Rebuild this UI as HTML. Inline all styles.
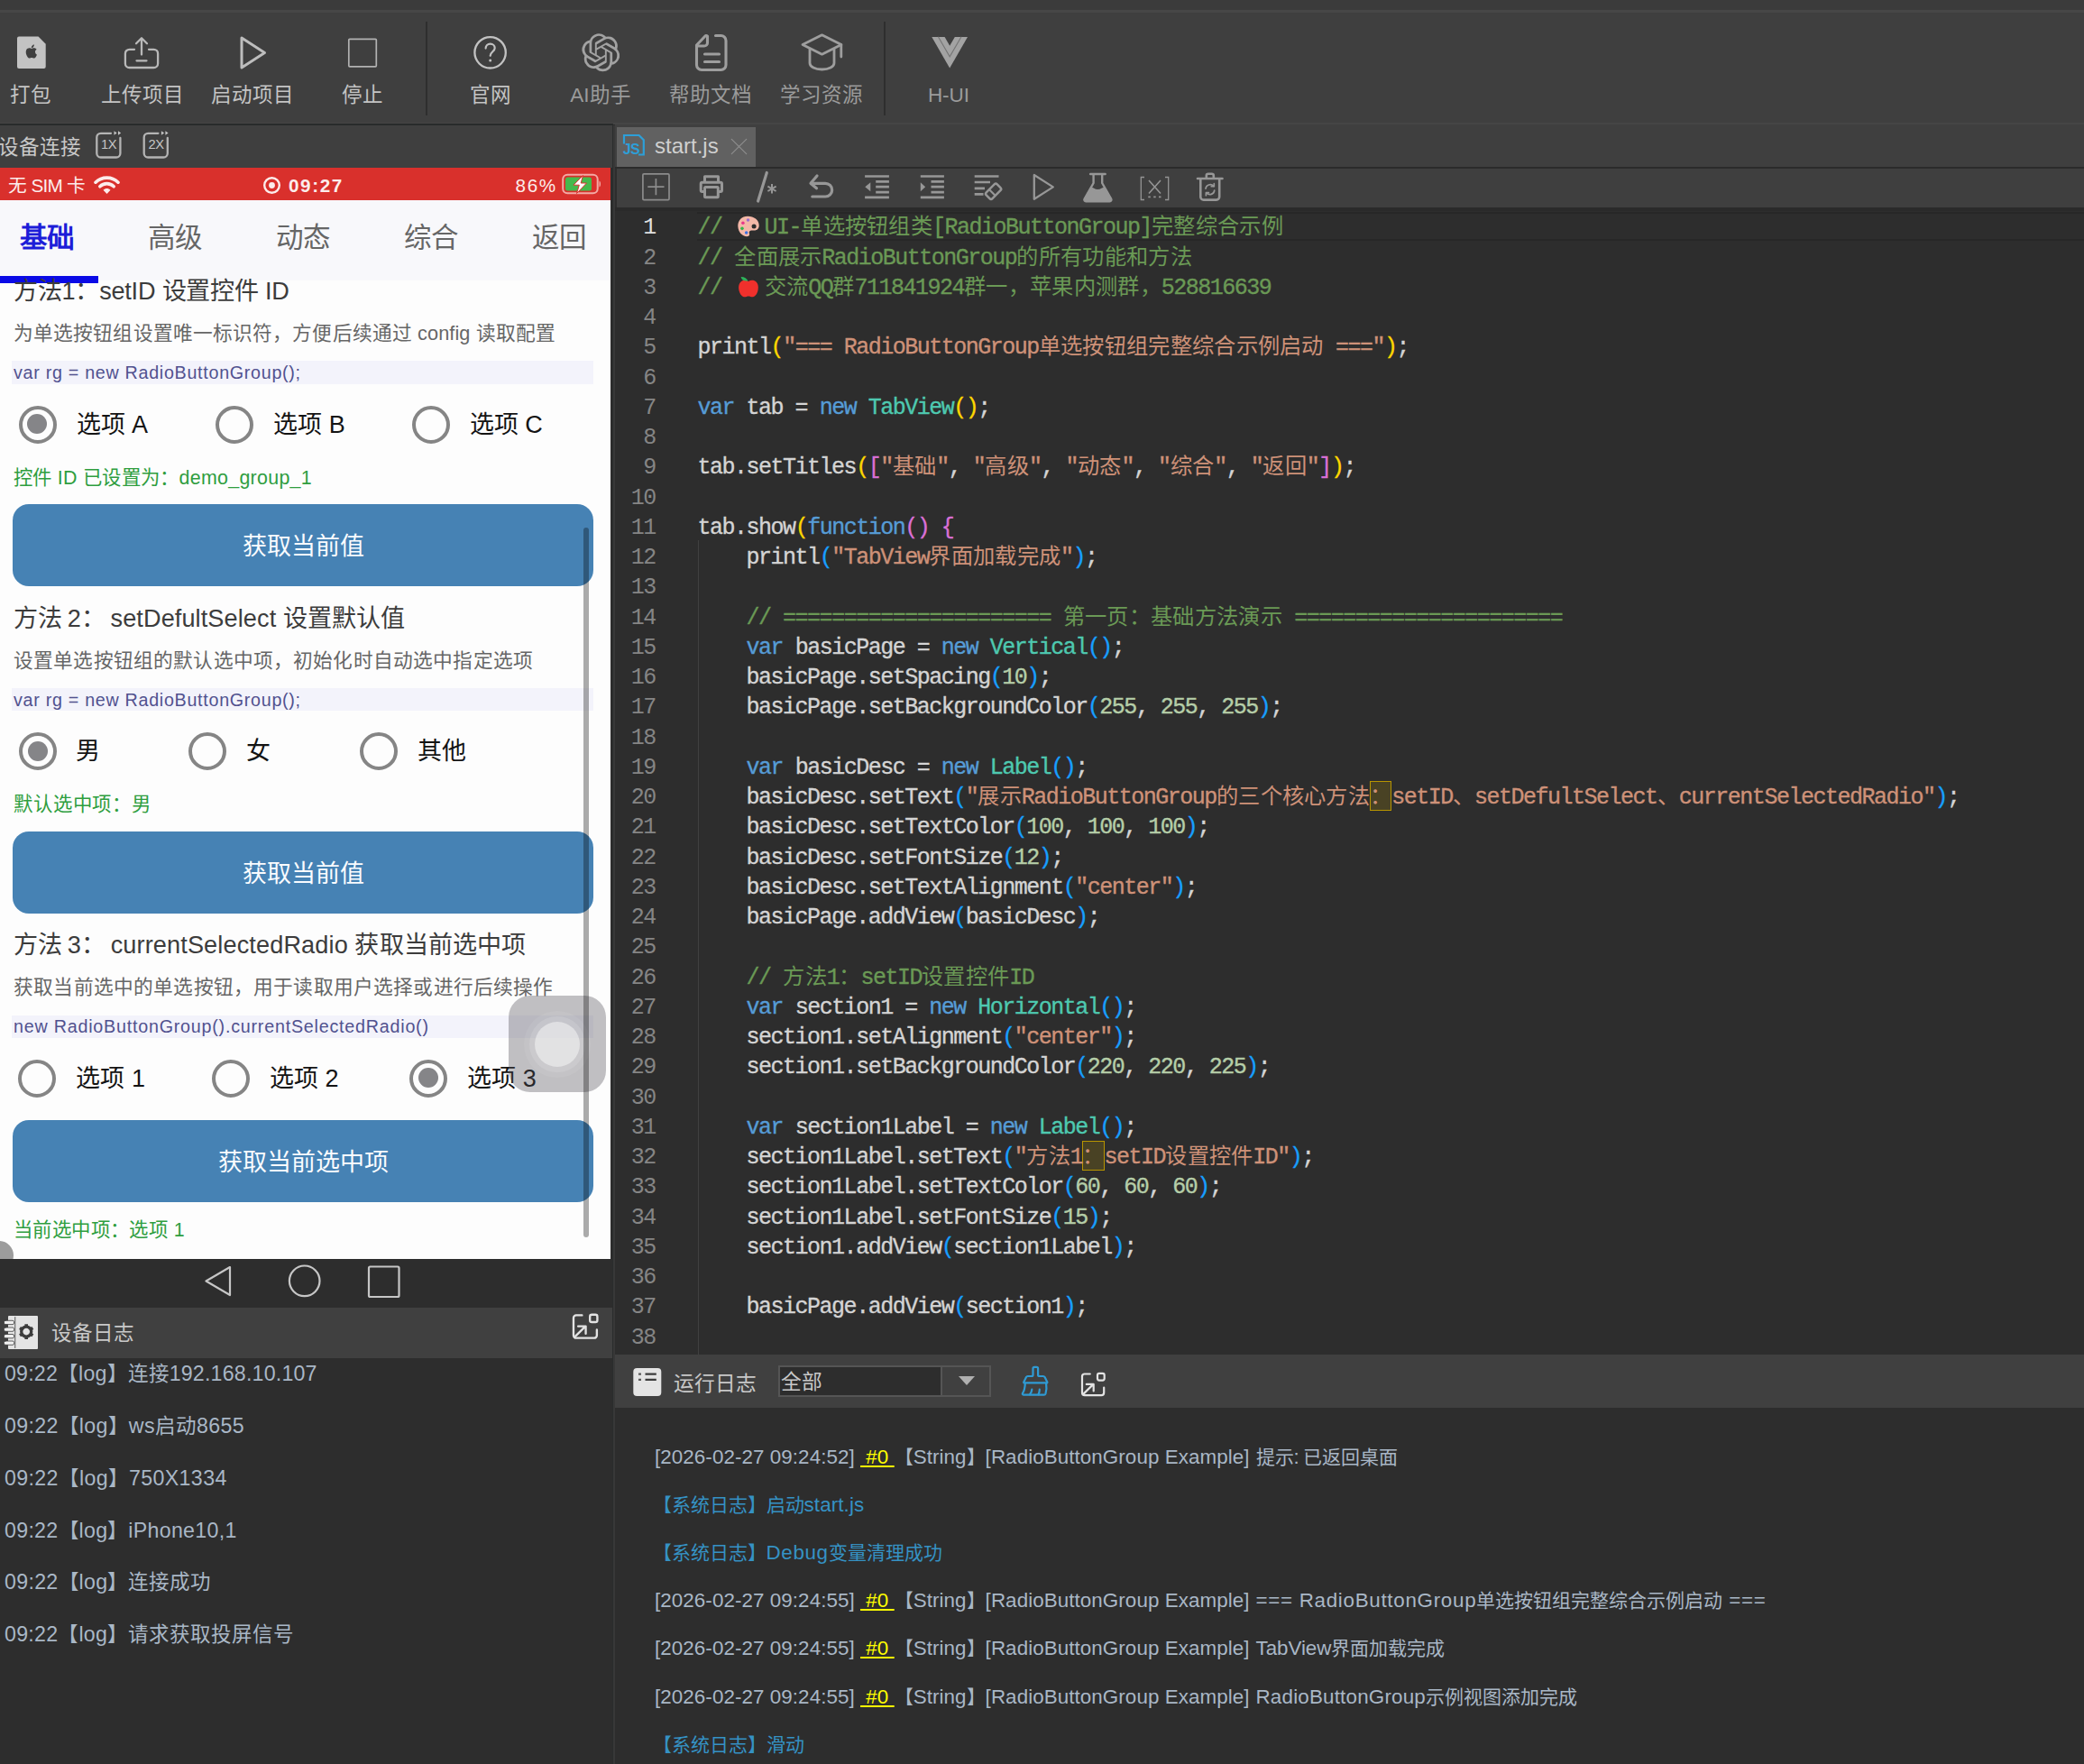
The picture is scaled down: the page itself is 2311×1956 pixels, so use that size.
<!DOCTYPE html>
<html lang="zh-CN"><head><meta charset="utf-8"><title>IDE</title>
<style>
*{margin:0;padding:0;box-sizing:border-box}
html,body{width:2311px;height:1956px;overflow:hidden;background:#2d2d2d}
body{position:relative;font-family:"Liberation Sans",sans-serif;color:#c8c8c8}
.abs,body>div,#phone div,#phone svg,body>svg{position:absolute}
/* ---- chrome ---- */
#topstrip{left:0;top:0;width:2311px;height:11px;background:#3b3b3b}
#topline{left:0;top:11px;width:2311px;height:3px;background:#474747}
#toolbar{left:0;top:14px;width:2311px;height:122px;background:#3f3f3f}
#tbline{left:0;top:136px;width:2311px;height:2px;background:#454545}
#tblineL{left:0;top:136.700px;width:680px;height:2.700px;background:#282b2b}
.vsep{width:2px;top:24px;height:104px;background:#2e2e2e}
.tl{top:92px;height:28px;line-height:28px;font-size:22.5px;color:#c4c4c4;text-align:center;white-space:nowrap;width:160px}
.tl.d{color:#9b9b9b}
#lhead{left:0;top:139px;width:678.800px;height:47px;background:#3f3f3f}
#lheadr{left:678.800px;top:137px;width:1.300px;height:1819px;background:#2a2c2c}
#lheadt{left:-2.500px;top:150px;font-size:22.5px;line-height:28px;color:#c8c8c8;white-space:nowrap}
#split{left:680.100px;top:139px;width:1.900px;height:1817px;background:#383838}
#tabbar{left:682px;top:138px;width:1629px;height:47px;background:#3f3f3f}
#tab{left:684px;top:141px;width:153.500px;height:44px;background:#616161}
#tabt{left:726px;top:146px;font-size:24px;line-height:32px;color:#d0d0d0;white-space:nowrap}
#tabline{left:682px;top:185px;width:1629px;height:2px;background:#2b2b2b}
#etool{left:684px;top:187px;width:1627px;height:43px;background:#3f3f3f}
#egap{left:682px;top:230px;width:1629px;height:4px;background:#2a2a2a}
#editor{left:682px;top:0;width:1629px;height:1502px;overflow:hidden}
#curline{left:773px;top:235px;width:1538px;height:32px;border-top:2px solid #272727;border-bottom:2px solid #272727}
#guide{left:774px;top:599px;width:1px;height:903px;background:#404040}
/* ---- code ---- */
#editor div{position:absolute}
.ln{left:0;width:44.7px;text-align:right;font-family:"Liberation Mono",monospace;font-size:25px;letter-spacing:-1.5px;line-height:33.25px;height:33.25px;color:#858585;white-space:pre}
.ln.a{color:#e0e0e0}
.cl_{-webkit-text-stroke:.35px;left:91.6px;font-family:"Liberation Mono",monospace;font-size:25px;letter-spacing:-1.5px;line-height:33.25px;height:33.25px;color:#d4d4d4;white-space:pre}
.cm{color:#6a9955}.kw{color:#569cd6}.cl{color:#4ec9b0}.st{color:#ce9178}.nu{color:#b5cea8}
.c{font-family:"Liberation Serif",serif;font-size:24.3px;line-height:20px;letter-spacing:0;-webkit-text-stroke:0}
.c i{display:inline-block;width:24.3px;text-align:center;font-style:normal}
.ub{width:24.3px;height:32.6px;border:1.5px solid #b89500;background:rgba(184,149,0,.2)}
.emo{position:static!important;display:inline-block;width:32px;height:30px;vertical-align:-7px;margin-right:1.5px}
/* ---- logs ---- */
#dlhead{left:0;top:1450px;width:679px;height:56px;background:#404040}
#dlheadt{left:57px;top:1463.200px;font-size:22.5px;line-height:32px;color:#c8c8c8;white-space:nowrap}
.dl{left:5px;font-size:23.2px;line-height:40px;height:40px;color:#a9b7c6;white-space:nowrap}
#rlhead{left:682px;top:1502px;width:1629px;height:59px;background:#404040}
#rlheadt{left:747px;top:1518px;font-size:22.7px;line-height:32px;color:#c8c8c8;white-space:nowrap}
#rlsel{left:862.800px;top:1514px;width:236px;height:35px;border:2px solid #555;background:#404040}
#rlsel i{position:absolute;left:0;top:0;width:180px;height:31px;background:#2d2d2d;border-right:2px solid #555}
#rlselt{left:866px;top:1515.500px;font-size:22.7px;line-height:32px;color:#c8c8c8}
#rlarr{left:1062.800px;top:1526.300px;width:0;height:0;border-left:9px solid transparent;border-right:9px solid transparent;border-top:10px solid #b0b0b0}
.rl{left:726px;font-size:22.4px;line-height:40px;height:40px;color:#a9b7c6;white-space:nowrap}
.rl.sy{color:#3592c4;left:723.5px}
.rl .k{font-size:21px;letter-spacing:0}
.dl .k{font-size:22.5px;letter-spacing:0}
.h0{color:#ffff00;text-decoration:underline}
/* ---- phone ---- */
#phone{left:0;top:0;width:679px;height:1450px;overflow:hidden}
#pbg{left:0;top:222px;width:677px;height:1174px;background:#fdfdfd}
#pstat{left:0;top:186px;width:677px;height:36px;background:#d9302c}
.pt{white-space:nowrap}
.st1{font-size:20.7px;line-height:24px;color:#fceceb}
.st1.b{font-weight:bold}
#ptabs{left:0;top:222px;width:677px;height:89px;background:#f8f8fb}
#ptabs2{display:none}
.tb{font-size:30.5px;line-height:38px;color:#666}
.tb.a{color:#1d1dd8;font-weight:bold}
#pind{left:0;top:306px;width:109px;height:7.500px;background:#0a0ae6}
.ti{font-size:27.1px;line-height:34px;color:#3c3c3c}
.de{font-size:21.7px;line-height:28px;color:#666}
.pcb{left:13px;width:645px;height:25.500px;background:#f3f3fb}
.co{font-size:19.7px;line-height:26px;color:#51518f}
.rd{width:42px;height:42px;border-radius:50%;border:4.500px solid #858585}
.rd i{position:absolute;left:5.500px;top:5.500px;width:22px;height:22px;border-radius:50%;background:#858588}
.rl_{font-size:27px;line-height:36px;color:#141414}
.gr{font-size:21.4px;line-height:26px;color:#2f9e3f}
.bt{left:14.400px;width:644px;height:90.600px;border-radius:18px;background:#4682b4;color:#fafcff;font-size:27px;line-height:95px;text-align:center;overflow:hidden}
#at{left:563.500px;top:1104px;width:108.500px;height:107px;border-radius:24px;background:rgba(76,74,82,.35)}
#at i,#at b,#at u{position:absolute;display:block}
#at i{left:17.500px;top:17px;width:74px;height:74px;border-radius:50%;background:rgba(255,255,255,.07)}
#at b{left:23.500px;top:23px;width:62px;height:62px;border-radius:50%;background:rgba(255,255,255,.13)}
#at u{left:29.700px;top:28.800px;width:50px;height:50px;border-radius:50%;background:rgba(255,255,255,.45)}
#corner{left:-17px;top:1376px;width:32px;height:32px;border-radius:50%;background:#9c9c9c}
#psb{left:647.200px;top:584.600px;width:5.500px;height:787px;border-radius:3px;background:rgba(0,0,0,.32)}
#pnav{left:0;top:1395.600px;width:679px;height:55px;background:#2d2d2d}
#jst{left:690.800px;top:156.600px;font-size:16px;font-weight:bold;line-height:18px;color:#2d9fd8;letter-spacing:-.6px}
.xt{top:151px;font-size:14.700px;line-height:18px;color:#c6c6c6;letter-spacing:-.3px}
.rm{font-size:22.4px;line-height:40px;height:40px;color:#a9b7c6;white-space:nowrap;left:1392.500px}
.rm .k{font-size:21px;letter-spacing:0}

</style></head><body>
<div id="topstrip"></div><div id="topline"></div>
<div id="toolbar"></div><div id="tbline"></div><div id="tblineL"></div>
<div class="vsep" style="left:472px"></div><div class="vsep" style="left:980px"></div>
<div class="tl" style="left:-46px">打包</div>
<div class="tl" style="left:78px">上传项目</div>
<div class="tl" style="left:200px">启动项目</div>
<div class="tl" style="left:322px">停止</div>
<div class="tl" style="left:464px">官网</div>
<div class="tl d" style="left:586px">AI助手</div>
<div class="tl d" style="left:708px">帮助文档</div>
<div class="tl d" style="left:831px">学习资源</div>
<div class="tl d" style="left:972px">H-UI</div>
<div id="lhead"></div><div id="lheadt">设备连接</div>
<div id="lheadr"></div><div id="split"></div>
<div id="tabbar"></div><div id="tab"></div><div id="tabt">start.js</div><div id="tabline"></div>
<div id="etool"></div><div id="egap"></div>
<div id="curline"></div><div id="guide"></div>
<div id="dlhead"></div><div id="dlheadt">设备日志</div>
<div id="rlhead"></div><div id="rlheadt">运行日志</div>
<div id="rlsel"><i></i></div><div id="rlselt">全部</div><div id="rlarr"></div>
<div class="ub" style="left:1518.900px;top:866px"></div><div class="ub" style="left:1200.300px;top:1265px"></div>

<!-- editor -->
<div id="editor">
<div class="ln a" style="top:236.30px">1</div>
<div class="cl_" style="top:236.30px"><span class="cm">// <svg class="emo" viewBox="0 0 32 32"><path d="M15 4C8 4 3.5 9 3.5 15.5S8.5 28 14 28c2.6 0 3.6-1.6 3-3.4-.7-2.2.3-3.8 2.6-3.8h3.2c3.4 0 5.7-2.4 5.7-6C28.500 8.500 22.500 4 15 4z" fill="#f4b8a8"></path><circle cx="22.500" cy="16" r="2.700" fill="#2d2d2d"></circle><circle cx="9.500" cy="12" r="1.900" fill="#e8358a"></circle><circle cx="15.500" cy="8.500" r="1.900" fill="#9a6fd0"></circle><circle cx="8.500" cy="18.500" r="1.900" fill="#35b54a"></circle><circle cx="13.500" cy="23.500" r="1.900" fill="#3a6fe0"></circle></svg>UI-<span class="c"><i>单</i><i>选</i><i>按</i><i>钮</i><i>组</i><i>类</i></span>[RadioButtonGroup]<span class="c"><i>完</i><i>整</i><i>综</i><i>合</i><i>示</i><i>例</i></span></span></div>
<div class="ln" style="top:269.55px">2</div>
<div class="cl_" style="top:269.55px"><span class="cm">// <span class="c"><i>全</i><i>面</i><i>展</i><i>示</i></span>RadioButtonGroup<span class="c"><i>的</i><i>所</i><i>有</i><i>功</i><i>能</i><i>和</i><i>方</i><i>法</i></span></span></div>
<div class="ln" style="top:302.80px">3</div>
<div class="cl_" style="top:302.80px"><span class="cm">// <svg class="emo" viewBox="0 0 32 32"><path d="M16 9.500c-2.500-1.600-6-1.800-8.500.200C4.500 12 3.800 16.500 5 21c1 3.800 3.600 7 6.500 7 1.800 0 2.600-.8 4.500-.8s2.700.8 4.500.8c2.900 0 5.500-3.200 6.500-7 1.200-4.500.5-9-2.500-11.300-2.500-2-6-1.800-8.500-.2z" fill="#f0302c"></path><path d="M15.500 9C14 6 11 4 7 4.200 8 8 11 9.800 15.500 9z" fill="#2fb25a"></path></svg><span class="c"><i>交</i><i>流</i></span>QQ<span class="c"><i>群</i></span>711841924<span class="c"><i>群</i><i>一</i><i>，</i><i>苹</i><i>果</i><i>内</i><i>测</i><i>群</i><i>，</i></span>528816639</span></div>
<div class="ln" style="top:336.05px">4</div>
<div class="ln" style="top:369.30px">5</div>
<div class="cl_" style="top:369.30px">printl<span style="color:#ffd700">(</span><span class="st">"=== RadioButtonGroup<span class="c"><i>单</i><i>选</i><i>按</i><i>钮</i><i>组</i><i>完</i><i>整</i><i>综</i><i>合</i><i>示</i><i>例</i><i>启</i><i>动</i></span> ==="</span><span style="color:#ffd700">)</span>;</div>
<div class="ln" style="top:402.55px">6</div>
<div class="ln" style="top:435.80px">7</div>
<div class="cl_" style="top:435.80px"><span class="kw">var</span> tab = <span class="kw">new</span> <span class="cl">TabView</span><span style="color:#ffd700">(</span><span style="color:#ffd700">)</span>;</div>
<div class="ln" style="top:469.05px">8</div>
<div class="ln" style="top:502.30px">9</div>
<div class="cl_" style="top:502.30px">tab.setTitles<span style="color:#ffd700">(</span><span style="color:#da70d6">[</span><span class="st">"<span class="c"><i>基</i><i>础</i></span>"</span>, <span class="st">"<span class="c"><i>高</i><i>级</i></span>"</span>, <span class="st">"<span class="c"><i>动</i><i>态</i></span>"</span>, <span class="st">"<span class="c"><i>综</i><i>合</i></span>"</span>, <span class="st">"<span class="c"><i>返</i><i>回</i></span>"</span><span style="color:#da70d6">]</span><span style="color:#ffd700">)</span>;</div>
<div class="ln" style="top:535.55px">10</div>
<div class="ln" style="top:568.80px">11</div>
<div class="cl_" style="top:568.80px">tab.show<span style="color:#ffd700">(</span><span class="kw">function</span><span style="color:#da70d6">(</span><span style="color:#da70d6">)</span> <span style="color:#da70d6">{</span></div>
<div class="ln" style="top:602.05px">12</div>
<div class="cl_" style="top:602.05px">    printl<span style="color:#179fff">(</span><span class="st">"TabView<span class="c"><i>界</i><i>面</i><i>加</i><i>载</i><i>完</i><i>成</i></span>"</span><span style="color:#179fff">)</span>;</div>
<div class="ln" style="top:635.30px">13</div>
<div class="ln" style="top:668.55px">14</div>
<div class="cl_" style="top:668.55px">    <span class="cm">// ====================== <span class="c"><i>第</i><i>一</i><i>页</i><i>：</i><i>基</i><i>础</i><i>方</i><i>法</i><i>演</i><i>示</i></span> ======================</span></div>
<div class="ln" style="top:701.80px">15</div>
<div class="cl_" style="top:701.80px">    <span class="kw">var</span> basicPage = <span class="kw">new</span> <span class="cl">Vertical</span><span style="color:#179fff">(</span><span style="color:#179fff">)</span>;</div>
<div class="ln" style="top:735.05px">16</div>
<div class="cl_" style="top:735.05px">    basicPage.setSpacing<span style="color:#179fff">(</span><span class="nu">10</span><span style="color:#179fff">)</span>;</div>
<div class="ln" style="top:768.30px">17</div>
<div class="cl_" style="top:768.30px">    basicPage.setBackgroundColor<span style="color:#179fff">(</span><span class="nu">255</span>, <span class="nu">255</span>, <span class="nu">255</span><span style="color:#179fff">)</span>;</div>
<div class="ln" style="top:801.55px">18</div>
<div class="ln" style="top:834.80px">19</div>
<div class="cl_" style="top:834.80px">    <span class="kw">var</span> basicDesc = <span class="kw">new</span> <span class="cl">Label</span><span style="color:#179fff">(</span><span style="color:#179fff">)</span>;</div>
<div class="ln" style="top:868.05px">20</div>
<div class="cl_" style="top:868.05px">    basicDesc.setText<span style="color:#179fff">(</span><span class="st">"<span class="c"><i>展</i><i>示</i></span>RadioButtonGroup<span class="c"><i>的</i><i>三</i><i>个</i><i>核</i><i>心</i><i>方</i><i>法</i></span><span class="c"><i style="text-align:left">：</i></span>setID<span class="c"><i>、</i></span>setDefultSelect<span class="c"><i>、</i></span>currentSelectedRadio"</span><span style="color:#179fff">)</span>;</div>
<div class="ln" style="top:901.30px">21</div>
<div class="cl_" style="top:901.30px">    basicDesc.setTextColor<span style="color:#179fff">(</span><span class="nu">100</span>, <span class="nu">100</span>, <span class="nu">100</span><span style="color:#179fff">)</span>;</div>
<div class="ln" style="top:934.55px">22</div>
<div class="cl_" style="top:934.55px">    basicDesc.setFontSize<span style="color:#179fff">(</span><span class="nu">12</span><span style="color:#179fff">)</span>;</div>
<div class="ln" style="top:967.80px">23</div>
<div class="cl_" style="top:967.80px">    basicDesc.setTextAlignment<span style="color:#179fff">(</span><span class="st">"center"</span><span style="color:#179fff">)</span>;</div>
<div class="ln" style="top:1001.05px">24</div>
<div class="cl_" style="top:1001.05px">    basicPage.addView<span style="color:#179fff">(</span>basicDesc<span style="color:#179fff">)</span>;</div>
<div class="ln" style="top:1034.30px">25</div>
<div class="ln" style="top:1067.55px">26</div>
<div class="cl_" style="top:1067.55px">    <span class="cm">// <span class="c"><i>方</i><i>法</i></span>1<span class="c"><i>：</i></span>setID<span class="c"><i>设</i><i>置</i><i>控</i><i>件</i></span>ID</span></div>
<div class="ln" style="top:1100.80px">27</div>
<div class="cl_" style="top:1100.80px">    <span class="kw">var</span> section1 = <span class="kw">new</span> <span class="cl">Horizontal</span><span style="color:#179fff">(</span><span style="color:#179fff">)</span>;</div>
<div class="ln" style="top:1134.05px">28</div>
<div class="cl_" style="top:1134.05px">    section1.setAlignment<span style="color:#179fff">(</span><span class="st">"center"</span><span style="color:#179fff">)</span>;</div>
<div class="ln" style="top:1167.30px">29</div>
<div class="cl_" style="top:1167.30px">    section1.setBackgroundColor<span style="color:#179fff">(</span><span class="nu">220</span>, <span class="nu">220</span>, <span class="nu">225</span><span style="color:#179fff">)</span>;</div>
<div class="ln" style="top:1200.55px">30</div>
<div class="ln" style="top:1233.80px">31</div>
<div class="cl_" style="top:1233.80px">    <span class="kw">var</span> section1Label = <span class="kw">new</span> <span class="cl">Label</span><span style="color:#179fff">(</span><span style="color:#179fff">)</span>;</div>
<div class="ln" style="top:1267.05px">32</div>
<div class="cl_" style="top:1267.05px">    section1Label.setText<span style="color:#179fff">(</span><span class="st">"<span class="c"><i>方</i><i>法</i></span>1<span class="c"><i style="text-align:left">：</i></span>setID<span class="c"><i>设</i><i>置</i><i>控</i><i>件</i></span>ID"</span><span style="color:#179fff">)</span>;</div>
<div class="ln" style="top:1300.30px">33</div>
<div class="cl_" style="top:1300.30px">    section1Label.setTextColor<span style="color:#179fff">(</span><span class="nu">60</span>, <span class="nu">60</span>, <span class="nu">60</span><span style="color:#179fff">)</span>;</div>
<div class="ln" style="top:1333.55px">34</div>
<div class="cl_" style="top:1333.55px">    section1Label.setFontSize<span style="color:#179fff">(</span><span class="nu">15</span><span style="color:#179fff">)</span>;</div>
<div class="ln" style="top:1366.80px">35</div>
<div class="cl_" style="top:1366.80px">    section1.addView<span style="color:#179fff">(</span>section1Label<span style="color:#179fff">)</span>;</div>
<div class="ln" style="top:1400.05px">36</div>
<div class="ln" style="top:1433.30px">37</div>
<div class="cl_" style="top:1433.30px">    basicPage.addView<span style="color:#179fff">(</span>section1<span style="color:#179fff">)</span>;</div>
<div class="ln" style="top:1466.55px">38</div>
</div>
<!-- phone -->
<div id="phone">
<div id="pbg"></div>
<div id="pstat"></div>
<div class="pt st1" style="left: 9px; top: 194px; letter-spacing: -0.669px;">无 SIM 卡</div>
<svg style="left:104px;top:194px" width="29" height="22" viewBox="0 0 29 22"><path d="M2 8.200C8.800 1.400 20.200 1.400 27 8.200" fill="none" stroke="#fceceb" stroke-width="3.600" stroke-linecap="round"></path><path d="M6.800 12.800c4.300-4.300 11.100-4.300 15.400 0" fill="none" stroke="#fceceb" stroke-width="3.600" stroke-linecap="round"></path><path d="M14.500 21l-4-4.300c2.200-2.200 5.800-2.200 8 0z" fill="#fceceb"></path></svg>
<svg style="left:291px;top:195px" width="21" height="21" viewBox="0 0 21 21"><circle cx="10.500" cy="10.500" r="8.300" fill="none" stroke="#fceceb" stroke-width="2.400"></circle><circle cx="10.500" cy="10.500" r="3.400" fill="#fceceb"></circle></svg>
<div class="pt st1 b" style="left: 320px; top: 194px; letter-spacing: 1.616px;">09:27</div>
<div class="pt st1" style="left: 571.6px; top: 194px; letter-spacing: 1.531px;">86%</div>
<svg style="left:623px;top:192px" width="46" height="25" viewBox="0 0 46 25"><rect x="1.200" y="1.700" width="38.500" height="20.600" rx="5" fill="none" stroke="#f3a9a4" stroke-width="2"></rect><rect x="4" y="4.600" width="29" height="14.800" rx="2.500" fill="#45b94c"></rect><path d="M41.500 8.500c2 .6 2 6.400 0 7z" fill="#f3a9a4"></path><path d="M23.500 2.500L13 13.200h6.300L16.500 22.500 27.500 11h-6.300z" fill="#fff" stroke="#d9302c" stroke-width="1"></path></svg>
<div id="ptabs"></div>
<div class="pt tb a" style="left:22px;top:244px">基础</div>
<div class="pt tb" style="left:164px;top:244px">高级</div>
<div class="pt tb" style="left:306px;top:244px">动态</div>
<div class="pt tb" style="left:448px;top:244px">综合</div>
<div class="pt tb" style="left:590px;top:244px">返回</div>
<div id="pind"></div>
<div class="pt ti" style="left: 15px; top: 305.8px; letter-spacing: -0.228px;">方法1：setID 设置控件 ID</div>
<div class="pt de" style="left: 15px; top: 355.8px; letter-spacing: 0.096px;">为单选按钮组设置唯一标识符，方便后续通过 config 读取配置</div>
<div class="pcb" style="top:400.2px"></div>
<div class="pt co" style="left: 15px; top: 399.8px; letter-spacing: 0.712px;">var rg = new RadioButtonGroup();</div>
<div class="rd" style="left:20.8px;top:449.5px"><i></i></div>
<div class="pt rl_" style="left:84.6px;top:452.5px">选项 A</div>
<div class="rd" style="left:239.0px;top:449.5px"></div>
<div class="pt rl_" style="left:303.3px;top:452.5px">选项 B</div>
<div class="rd" style="left:457.0px;top:449.5px"></div>
<div class="pt rl_" style="left:520.7px;top:452.5px">选项 C</div>
<div class="pt gr" style="left: 15px; top: 516.5px; letter-spacing: 0.296px;">控件 ID 已设置为：demo_group_1</div>
<div class="bt" style="top:559.4px">获取当前值</div>
<div class="pt ti" style="left: 15px; top: 668.5px; letter-spacing: 0.101px;">方法 2： setDefultSelect 设置默认值</div>
<div class="pt de" style="left: 15px; top: 718.5px; letter-spacing: 0.154px;">设置单选按钮组的默认选中项，初始化时自动选中指定选项</div>
<div class="pcb" style="top:762.9px"></div>
<div class="pt co" style="left: 15px; top: 762.5px; letter-spacing: 0.712px;">var rg = new RadioButtonGroup();</div>
<div class="rd" style="left:21.0px;top:812.2px"><i></i></div>
<div class="pt rl_" style="left:84.0px;top:815.2px">男</div>
<div class="rd" style="left:209.4px;top:812.2px"></div>
<div class="pt rl_" style="left:273.0px;top:815.2px">女</div>
<div class="rd" style="left:399.0px;top:812.2px"></div>
<div class="pt rl_" style="left:463.0px;top:815.2px">其他</div>
<div class="pt gr" style="left: 15px; top: 879.2px; letter-spacing: 0.857px;">默认选中项：男</div>
<div class="bt" style="top:922.1px">获取当前值</div>
<div class="pt ti" style="left: 15px; top: 1031.2px; letter-spacing: 0.129px;">方法 3： currentSelectedRadio 获取当前选中项</div>
<div class="pt de" style="left: 15px; top: 1081.2px; letter-spacing: 0.17px;">获取当前选中的单选按钮，用于读取用户选择或进行后续操作</div>
<div class="pcb" style="top:1125.6px"></div>
<div class="pt co" style="left: 15px; top: 1125.2px; letter-spacing: 0.78px;">new RadioButtonGroup().currentSelectedRadio()</div>
<div class="rd" style="left:20.4px;top:1174.9px"></div>
<div class="pt rl_" style="left:84.4px;top:1177.9px">选项 1</div>
<div class="rd" style="left:234.6px;top:1174.9px"></div>
<div class="pt rl_" style="left:299.0px;top:1177.9px">选项 2</div>
<div class="rd" style="left:454.2px;top:1174.9px"><i></i></div>
<div class="pt rl_" style="left:518.2px;top:1177.9px">选项 3</div>
<div class="bt" style="top:1242.3px">获取当前选中项</div>
<div class="pt gr" style="left: 15px; top: 1351px; letter-spacing: 0.416px;">当前选中项：选项 1</div>
<div id="ptabs2"></div>
<div id="at"><i></i><b></b><u></u></div>
<div id="corner"></div>
<div id="psb"></div>
<div id="pnav"></div>
<svg style="left:220px;top:1398px" width="240" height="46" viewBox="0 0 240 46"><path d="M35 7L8.500 22.500 35 38z" fill="none" stroke="#c6c6c6" stroke-width="2.200" stroke-linejoin="round"></path><circle cx="117.700" cy="22.300" r="16.800" fill="none" stroke="#c6c6c6" stroke-width="2.200"></circle><rect x="189" y="6.500" width="33.500" height="33.500" rx="1.500" fill="none" stroke="#c6c6c6" stroke-width="2.200"></rect></svg>
</div>
<!-- logs -->
<div class="dl" style="top: 1502.8px; letter-spacing: 0.206px;">09:22<span class="k">【</span>log<span class="k">】</span><span class="k">连接</span>192.168.10.107</div>
<div class="dl" style="top: 1560.7px; letter-spacing: 0.356px;">09:22<span class="k">【</span>log<span class="k">】</span>ws<span class="k">启动</span>8655</div>
<div class="dl" style="top: 1618.6px; letter-spacing: 0.373px;">09:22<span class="k">【</span>log<span class="k">】</span>750X1334</div>
<div class="dl" style="top: 1676.5px; letter-spacing: 0.293px;">09:22<span class="k">【</span>log<span class="k">】</span>iPhone10,1</div>
<div class="dl" style="top: 1734.4px; letter-spacing: 0.302px;">09:22<span class="k">【</span>log<span class="k">】</span><span class="k">连接成功</span></div>
<div class="dl" style="top: 1792.3px; letter-spacing: 0.277px;">09:22<span class="k">【</span>log<span class="k">】</span><span class="k">请求获取投屏信号</span></div>
<div class="rl" style="top: 1595.5px; letter-spacing: 0.067px;">[2026-02-27 09:24:52] <span class="h0">&nbsp;#0&nbsp;</span><span class="k">【</span>String<span class="k">】</span>[RadioButtonGroup Example]</div>
<div class="rm" style="top: 1595.5px; letter-spacing: -1.127px;"><span class="k">提示</span>: <span class="k">已返回桌面</span></div>
<div class="rl sy" style="top: 1648.7px; letter-spacing: 0.108px;"><span class="k">【系统日志】启动</span>start.js</div>
<div class="rl sy" style="top: 1701.9px; letter-spacing: 0.643px;"><span class="k">【系统日志】</span>Debug<span class="k">变量清理成功</span></div>
<div class="rl" style="top: 1755.1px; letter-spacing: 0.067px;">[2026-02-27 09:24:55] <span class="h0">&nbsp;#0&nbsp;</span><span class="k">【</span>String<span class="k">】</span>[RadioButtonGroup Example]</div>
<div class="rm" style="top: 1755.1px; letter-spacing: 0.693px;">=== RadioButtonGroup<span class="k">单选按钮组完整综合示例启动</span> ===</div>
<div class="rl" style="top: 1808.3px; letter-spacing: 0.067px;">[2026-02-27 09:24:55] <span class="h0">&nbsp;#0&nbsp;</span><span class="k">【</span>String<span class="k">】</span>[RadioButtonGroup Example]</div>
<div class="rm" style="top: 1808.3px; letter-spacing: -0.048px;">TabView<span class="k">界面加载完成</span></div>
<div class="rl" style="top: 1861.5px; letter-spacing: 0.067px;">[2026-02-27 09:24:55] <span class="h0">&nbsp;#0&nbsp;</span><span class="k">【</span>String<span class="k">】</span>[RadioButtonGroup Example]</div>
<div class="rm" style="top: 1861.5px; letter-spacing: 0.189px;">RadioButtonGroup<span class="k">示例视图添加完成</span></div>
<div class="rl sy" style="top: 1914.7px; letter-spacing: 0.188px;"><span class="k">【系统日志】滑动</span></div>
<svg id="ico" width="2311" height="1956" viewBox="0 0 2311 1956" style="left:0;top:0" fill="none" stroke-linecap="round" stroke-linejoin="round">
<!-- toolbar: pack (file + apple) -->
<path d="M21 40.600h21.500l8.200 8.200V74a2 2 0 0 1-2 2H21a2 2 0 0 1-2-2V42.600a2 2 0 0 1 2-2z" fill="#c3c3c3"></path>
<g transform="translate(27.300 49.500) scale(.63)" fill="#3f3f3f"><path d="M12.152 6.896c-.948 0-2.415-1.078-3.960-1.040-2.040.027-3.910 1.183-4.961 3.014-2.117 3.675-.546 9.103 1.519 12.090 1.013 1.454 2.208 3.090 3.792 3.039 1.520-.065 2.090-.987 3.935-.987 1.831 0 2.350.987 3.960.948 1.637-.026 2.676-1.480 3.676-2.948 1.156-1.688 1.636-3.325 1.662-3.415-.039-.013-3.182-1.221-3.220-4.857-.026-3.040 2.480-4.494 2.597-4.559-1.429-2.090-3.623-2.324-4.390-2.376-2-.156-3.675 1.090-4.610 1.090zM15.530 3.830c.843-1.012 1.400-2.427 1.245-3.830-1.207.052-2.662.805-3.532 1.818-.780.896-1.454 2.338-1.273 3.714 1.338.104 2.715-.688 3.559-1.701"></path></g>
<!-- upload -->
<g stroke="#b9b9b9" stroke-width="2.300"><path d="M149 54.800h-5.500a4.600 4.600 0 0 0-4.600 4.600v11a4.600 4.600 0 0 0 4.600 4.600h27a4.600 4.600 0 0 0 4.600-4.600v-11a4.600 4.600 0 0 0-4.600-4.600H165"></path><path d="M157 60.500V42.500M151 48.300l6-6 6 6M151.500 67.300h11"></path></g>
<!-- start (play) -->
<path d="M268 42v33l25.500-16.500z" stroke="#bdbdbd" stroke-width="3"></path>
<!-- stop -->
<rect x="386.800" y="43.300" width="30.500" height="30.500" rx="1" stroke="#b2b2b2" stroke-width="1.700"></rect>
<!-- website ? -->
<circle cx="543.600" cy="58.300" r="17.200" stroke="#c2c2c2" stroke-width="2.300"></circle>
<path d="M538.600 53.600c0-3 2.200-4.900 5.100-4.900s5 1.900 5 4.500c0 4-5 4.200-5 8.600" stroke="#c2c2c2" stroke-width="2.200"></path><circle cx="543.700" cy="67" r="1.500" fill="#c2c2c2"></circle>
<!-- AI (openai knot) -->
<g transform="translate(645.300 37.200) scale(1.750)" fill="#a2a2a2"><path d="M22.282 9.821a5.985 5.985 0 0 0-.516-4.911 6.046 6.046 0 0 0-6.510-2.900A6.065 6.065 0 0 0 4.981 4.182a5.985 5.985 0 0 0-3.998 2.900 6.046 6.046 0 0 0 .743 7.097 5.980 5.980 0 0 0 .511 4.911 6.051 6.051 0 0 0 6.515 2.900A5.985 5.985 0 0 0 13.260 24a6.056 6.056 0 0 0 5.772-4.206 5.989 5.989 0 0 0 3.998-2.900 6.056 6.056 0 0 0-.748-7.073zm-9.022 12.608a4.476 4.476 0 0 1-2.876-1.041l.142-.080 4.778-2.758a.795.795 0 0 0 .393-.681v-6.737l2.020 1.169a.071.071 0 0 1 .038.052v5.583a4.504 4.504 0 0 1-4.495 4.494zm-9.661-4.125a4.471 4.471 0 0 1-.535-3.014l.142.085 4.783 2.758a.771.771 0 0 0 .781 0l5.843-3.369v2.332a.080.080 0 0 1-.033.062L9.740 19.950a4.499 4.499 0 0 1-6.141-1.646zM2.341 7.896a4.485 4.485 0 0 1 2.366-1.973V11.600a.766.766 0 0 0 .388.677l5.814 3.354-2.020 1.169a.076.076 0 0 1-.071 0l-4.830-2.787A4.504 4.504 0 0 1 2.341 7.872zm16.596 3.856l-5.833-3.388L15.119 7.200a.076.076 0 0 1 .071 0l4.830 2.791a4.494 4.494 0 0 1-.677 8.104v-5.677a.790.790 0 0 0-.407-.667zm2.011-3.023l-.142-.085-4.774-2.782a.776.776 0 0 0-.785 0L9.409 9.230V6.897a.066.066 0 0 1 .028-.062l4.830-2.787a4.499 4.499 0 0 1 6.680 4.660zM8.307 12.863l-2.020-1.164a.080.080 0 0 1-.038-.057V6.074a4.499 4.499 0 0 1 7.376-3.454l-.142.081L8.704 5.459a.795.795 0 0 0-.393.681zm1.098-2.365l2.602-1.500 2.607 1.500v2.999l-2.597 1.500-2.607-1.500z"></path></g>
<!-- help doc -->
<g stroke="#9e9e9e" stroke-width="3.100"><path d="M783.500 39.500h-1l-10 10.500v22a5.500 5.500 0 0 0 5.500 5.500h21.500a5.500 5.500 0 0 0 5.500-5.500V45a5.500 5.500 0 0 0-5.500-5.500h-6"></path><path d="M784.500 40v7.500a3.500 3.500 0 0 1-3.500 3.500h-8M781.500 60h16M781.500 68.500h16"></path></g>
<!-- learn (grad cap) -->
<g stroke="#9e9e9e" stroke-width="2.800"><path d="M911.500 38.800l-21.500 10.700 21.500 10.700 21.500-10.700z"></path><path d="M898 54.500v15.500c0 4 6 7 13.500 7s13.500-3 13.500-7V54.500M932.800 50v13"></path></g>
<!-- H-UI (vue) -->
<path d="M1033.300 41h39.700l-19.850 34.500z" fill="#a3a3a3" stroke="none"></path>
<path d="M1047.300 40.500h11.800l-5.900 10.300z" fill="#3f3f3f" stroke="none"></path>
<path d="M1040.700 41.200l12.500 21.600 12.500-21.600" stroke="#757575" stroke-width="1.100" stroke-linejoin="miter"></path>
<!-- 1X / 2X -->
<g stroke="#b4b4b4" stroke-width="2.300"><path d="M123 147.800h-11.200a4.500 4.500 0 0 0-4.500 4.500v17.700a4.500 4.500 0 0 0 4.500 4.500h17.100a4.500 4.500 0 0 0 4.500-4.500V153"></path><path d="M175.400 147.800h-11.200a4.500 4.500 0 0 0-4.500 4.500v17.700a4.500 4.500 0 0 0 4.500 4.500h17.100a4.500 4.500 0 0 0 4.500-4.500V153"></path></g>
<g fill="#c4c4c4"><path d="M126.500 145.300l3.200 2.200-3.200 2.200zM131 145.300l3.200 2.200-3.200 2.200zM178.900 145.300l3.200 2.200-3.200 2.200zM183.400 145.300l3.200 2.200-3.200 2.200z"></path></g>
<!-- JS file icon -->
<g stroke="#2d9fd8" stroke-width="2.200" stroke-linecap="butt" stroke-linejoin="miter"><path d="M692 159.500v-9.500h16.600l5.200 5.200v16.300h-5.800"></path></g>
<!-- tab close -->
<path d="M811.300 154.300l16.400 16.400M827.700 154.300l-16.400 16.400" stroke="#8e8e8e" stroke-width="1.200"></path>
<!-- editor toolbar -->
<rect x="712.900" y="192.800" width="29.100" height="28.800" rx="1.200" stroke="#8c8c8c" stroke-width="1.700"></rect>
<path d="M718.300 207.200h18.200M727.400 198v18.200" stroke="#8c8c8c" stroke-width="1.700" stroke-linecap="butt"></path>
<g stroke="#979797" stroke-width="3"><path d="M781.500 201v-5.300h15v5.300"></path><rect x="777.200" y="202.200" width="23.300" height="10.200" rx="1.500"></rect><rect x="781.500" y="207.500" width="14.800" height="11.200" rx="1" fill="#3f3f3f"></rect></g>
<path d="M850.300 191.500l-9.700 31.500" stroke="#979797" stroke-width="3.200"></path>
<path d="M856 204v10.600M851.400 206.600l9.200 5.400M860.600 206.600l-9.200 5.400" stroke="#979797" stroke-width="2" stroke-linecap="butt"></path>
<g stroke="#979797" stroke-width="3.200"><path d="M899.800 203.300h15.500a7.350 7.350 0 0 1 0 14.700h-14.500"></path><path d="M906 195l-7 8.300 6.500 5.500"></path></g>
<g stroke="#979797" stroke-width="2.700" stroke-linecap="butt"><path d="M959.100 195.500h26.800M971.200 201.400h14.700M971.200 207.200h14.700M971.200 213.100h14.700M959.100 218.900h26.800"></path><path d="M1020.800 195.500h26.100M1032.500 201.400h14.400M1032.500 207.200h14.400M1032.500 213.100h14.400M1020.800 218.900h26.100"></path></g>
<path d="M959.300 207.200l6 -5v10zM1026.200 207.200l-5.400-5v10z" fill="#979797"></path>
<g stroke="#979797" stroke-width="2.700" stroke-linecap="butt"><path d="M1080.700 195.500h26.800M1080.700 202h17.300M1080.700 208.800h11.300M1080.700 215.400h9.800"></path></g>
<rect x="-8.500" y="-4.800" width="17" height="9.600" rx="2.200" transform="translate(1101.600 212.300) rotate(-45)" stroke="#979797" stroke-width="2.500" fill="#3f3f3f"></rect>
<path d="M1097.800 211l5.500 5.500" stroke="#979797" stroke-width="2.200"></path>
<path d="M1146.800 194v26.800l21-13.400z" stroke="#979797" stroke-width="2.300"></path>
<g><path d="M1209.200 193h16.400" stroke="#979797" stroke-width="2.600"></path><path d="M1212.600 193.500v9.500l-10 17.500a1.800 1.800 0 0 0 1.600 2.700h26.400a1.800 1.800 0 0 0 1.600-2.700l-10-17.500v-9.500" stroke="#979797" stroke-width="2.400"></path><path d="M1208.700 208.300c2.500-1.600 4.500 1.800 8.600 1.800s6.200-3.400 8.700-1.800l6.200 11.500a1.800 1.800 0 0 1-1.600 2.700h-26.400a1.800 1.800 0 0 1-1.600-2.700z" fill="#979797"></path></g>
<g stroke="#949494" stroke-width="1.300" stroke-linecap="butt" stroke-linejoin="miter"><path d="M1269 196.500h-3.700v25h3.700M1292 196.500h3.700v25h-3.700"></path><path d="M1274 200l13 14.500M1287 200l-13 14.500" stroke-width="1.600"></path><path d="M1273.300 218.400h2.500M1279.200 218.400h2.500M1285 218.400h2.500" stroke-width="1.600"></path></g>
<g stroke="#979797" stroke-width="2.600"><path d="M1328 198h27.500M1337.800 197.500v-2.800a2 2 0 0 1 2-2h4a2 2 0 0 1 2 2v2.800"></path><path d="M1331.300 198.500v19.800a3.300 3.300 0 0 0 3.300 3.300h14.300a3.300 3.300 0 0 0 3.300-3.300v-19.800"></path></g>
<g stroke="#979797" stroke-width="1.700"><path d="M1337 209.200a5 5 0 0 1 8.700-2.800M1346.700 211.200a5 5 0 0 1-8.700 2.800"></path><path d="M1346.300 203.700v3h-3M1337.400 216.700v-3h3"></path></g>
<!-- device-log header icon (notebook) -->
<rect x="9" y="1459" width="33" height="37" rx="1" fill="#e4e4e4"></rect>
<path d="M16.700 1460.500v34" stroke="#707070" stroke-width="1.200"></path>
<g fill="#f0f0f0" stroke="#3c3c3c" stroke-width=".8"><rect x="4.500" y="1464.300" width="11" height="4.300" rx="1.500"></rect><rect x="4.500" y="1472" width="11" height="4.300" rx="1.500"></rect><rect x="4.500" y="1479.500" width="11" height="4.300" rx="1.500"></rect><rect x="4.500" y="1487" width="11" height="4.300" rx="1.500"></rect></g>
<g transform="translate(29.200 1476.600)"><circle r="5.500" stroke="#3c3c3c" stroke-width="3.300" fill="none"></circle><g stroke="#3c3c3c" stroke-width="3.600" stroke-linecap="butt"><path d="M0-8.300v3M0 8.300v-3M7.200-4.150l-2.600 1.500M-7.200-4.150l2.600 1.500M7.200 4.150l-2.600-1.500M-7.200 4.150l2.600-1.500"></path></g></g>
<!-- export icons -->
<g id="exp" stroke="#e3e3e3" stroke-width="2.200"><path d="M1208.800 1523.500h-6a2.800 2.800 0 0 0-2.800 2.800v18a2.800 2.800 0 0 0 2.800 2.800h18.600a2.800 2.800 0 0 0 2.800-2.800v-5.800"></path><rect x="1217" y="1522.900" width="7.700" height="7.700" rx="2"></rect><path d="M1201.500 1545.600l10.700-10.500M1204.800 1534.900h7.900v7.600"></path></g>
<g stroke="#e3e3e3" stroke-width="2.200" transform="translate(634.800 1456.600) scale(1.070) translate(-1198.900 -1521.800)"><path d="M1208.800 1523.500h-6a2.800 2.800 0 0 0-2.800 2.800v18a2.800 2.800 0 0 0 2.800 2.800h18.600a2.800 2.800 0 0 0 2.800-2.800v-5.800"></path><rect x="1217" y="1522.900" width="7.700" height="7.700" rx="2"></rect><path d="M1201.500 1545.600l10.700-10.500M1204.800 1534.900h7.900v7.600"></path></g>
<!-- run-log header icon -->
<rect x="702.300" y="1517" width="31" height="31" rx="4" fill="#e4e4e4"></rect>
<path d="M715.500 1523.600h12.300M715.500 1529.800h12.300" stroke="#3c3c3c" stroke-width="2.300" stroke-linecap="butt"></path>
<path d="M708 1523.600h3M708 1529.800h3" stroke="#5a5a5a" stroke-width="2.300" stroke-linecap="butt"></path>
<!-- broom -->
<g stroke="#2f9bd4" stroke-width="2.200"><path d="M1145.500 1524.500v-7a1.700 1.700 0 0 1 1.700-1.700h2.200a1.700 1.700 0 0 1 1.700 1.700v7a1.500 1.500 0 0 0 1.500 1.500h4.200a2 2 0 0 1 1.800 1.100l2.700 5.300a.7.700 0 0 1-.6 1H1135.900a.7.700 0 0 1-.6-1l2.700-5.300a2 2 0 0 1 1.800-1.100h4.200a1.500 1.500 0 0 0 1.500-1.500z"></path><path d="M1136.800 1534c-.2 5-1.200 8.500-2.800 11a1 1 0 0 0 .8 1.600h22.800a2 2 0 0 0 1.900-1.300c1-3.500 1.200-7.500.6-11.300"></path><path d="M1144.300 1540.700c-.2 2.500-1 4.300-2.300 5.600M1152.800 1540.700c0 2.200-.5 4-1.300 5.600"></path></g>
</svg>
<div id="jst">JS</div>
<div class="xt" style="left:112px">1X</div><div class="xt" style="left:164.400px">2X</div>


</body></html>
